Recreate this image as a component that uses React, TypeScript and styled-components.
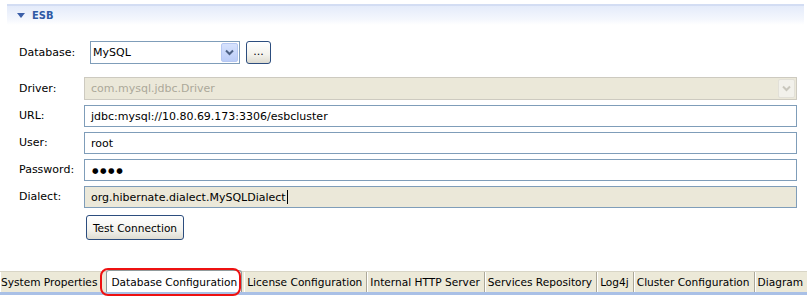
import React from 'react';
import styled, { createGlobalStyle } from 'styled-components';

const GlobalStyle = createGlobalStyle`
  html, body {
    margin: 0;
    padding: 0;
    background: #ffffff;
  }
  body {
    font-family: "DejaVu Sans", sans-serif;
    font-size: 11px;
    color: #000000;
  }
`;

const Page = styled.div`
  width: 807px;
  height: 296px;
  display: flex;
  flex-direction: column;
  overflow: hidden;
  position: relative;
`;

const Section = styled.div`
  margin: 4px 3px 0 7px;
  height: 19px;
  border-top: 2px solid #d3ddf3;
  background: linear-gradient(to bottom, #e4ebfa 0%, #f4f7fd 70%, #ffffff 100%);
  display: flex;
  align-items: center;
  gap: 7px;
  padding-left: 10px;
`;

const SectionTitle = styled.span`
  font-family: "DejaVu Sans Condensed", "DejaVu Sans", sans-serif;
  font-weight: bold;
  color: #2f5aa5;
  font-size: 11px;
`;

const Form = styled.div`
  display: grid;
  grid-template-columns: 65px 1fr;
  align-items: center;
  padding: 16px 10px 0 19px;
  row-gap: 5px;
`;

const Label = styled.div`
  height: 22px;
  line-height: 22px;
`;

const DbRow = styled.div`
  display: flex;
  align-items: center;
  gap: 6px;
  padding-left: 6px;
  margin-bottom: 8px;
`;

const DbLabel = styled(Label)`
  margin-bottom: 8px;
`;

const Combo = styled.div<{ $disabled?: boolean }>`
  box-sizing: border-box;
  height: 23px;
  width: ${(p) => (p.$disabled ? 'auto' : '150px')};
  border: 1px solid ${(p) => (p.$disabled ? '#cdcac0' : '#7f9db9')};
  background: ${(p) => (p.$disabled ? '#ebe8d9' : '#ffffff')};
  color: ${(p) => (p.$disabled ? '#aca899' : '#000000')};
  display: flex;
  align-items: center;
  padding: 0 1px 0 ${(p) => (p.$disabled ? '6px' : '2px')};
`;

const ComboText = styled.span`
  flex: 1;
`;

const ComboButton = styled.div<{ $disabled?: boolean }>`
  box-sizing: border-box;
  width: 17px;
  height: 19px;
  border-radius: 2px;
  border: 1px solid ${(p) => (p.$disabled ? '#e2e0d8' : '#b6c8f2')};
  background: ${(p) =>
    p.$disabled
      ? '#f2f1eb'
      : 'linear-gradient(to bottom, #d6e2fd 0%, #bccdf8 100%)'};
  display: flex;
  align-items: center;
  justify-content: center;
`;

const DotsButton = styled.div`
  box-sizing: border-box;
  width: 25px;
  height: 23px;
  border: 1px solid #2c4d7e;
  border-radius: 3px;
  background: linear-gradient(to bottom, #ffffff 0%, #f3f2ec 60%, #dcdad0 100%);
  display: flex;
  align-items: center;
  justify-content: center;
  padding-bottom: 2px;
`;

const Field = styled.div<{ $readonly?: boolean }>`
  box-sizing: border-box;
  height: 22px;
  border: 1px solid #7f9db9;
  background: ${(p) => (p.$readonly ? '#ebe8d9' : '#ffffff')};
  display: flex;
  align-items: center;
  padding-left: 6px;
`;

const Dots = styled.span`
  font-size: 7.5px;
  letter-spacing: 1.5px;
  margin-left: 1px;
`;

const Caret = styled.span`
  display: inline-block;
  width: 1px;
  height: 14px;
  background: #000000;
  margin-left: 1px;
`;

const Button = styled.div`
  box-sizing: border-box;
  grid-column: 2;
  justify-self: start;
  margin-top: 2px;
  margin-left: 2px;
  width: 98px;
  height: 25px;
  border: 1px solid #2c4d7e;
  border-radius: 3px;
  background: linear-gradient(to bottom, #ffffff 0%, #f4f3ee 60%, #dedcd2 100%);
  display: flex;
  align-items: center;
  justify-content: center;
  font-size: 10.6px;
`;

const TabBar = styled.div`
  margin-top: auto;
  margin-bottom: 1px;
  height: 20px;
  background: #ece9d8;
  border-top: 1px solid #d8d5c6;
  border-bottom: 3px solid #a9c0e6;
  display: flex;
  align-items: stretch;
  white-space: nowrap;
  font-size: 10.6px;
`;

const Tab = styled.div<{ $active?: boolean }>`
  display: flex;
  align-items: center;
  padding: 0 4px 0 ${(p) => (p.$active ? '4px' : '3px')};
  border-right: 1px solid #aca899;
  box-shadow: inset 1px 0 0 #ffffff;
  background: ${(p) => (p.$active ? '#ffffff' : 'transparent')};
  &:first-child {
    padding-left: 1px;
  }
  ${(p) =>
    p.$active &&
    `
    margin-top: -2px;
    border: 1px solid #919b9c;
    border-bottom: none;
    border-radius: 3px 3px 0 0;
    margin-left: 4px;
    margin-right: 2px;
  `}
`;

const Highlight = styled.div`
  position: absolute;
  left: 100px;
  top: 268px;
  width: 141px;
  height: 28px;
  box-sizing: border-box;
  border: 2px solid #ee1111;
  border-radius: 8px;
  pointer-events: none;
`;

const Chevron = ({ color }: { color: string }) => (
  <svg width="9" height="7" viewBox="0 0 9 7">
    <path d="M1 1.5 L4.5 5 L8 1.5" fill="none" stroke={color} strokeWidth="2" />
  </svg>
);

const tabs = [
  'System Properties',
  'Database Configuration',
  'License Configuration',
  'Internal HTTP Server',
  'Services Repository',
  'Log4j',
  'Cluster Configuration',
  'Diagram',
];

export default function App() {
  return (
    <Page>
      <GlobalStyle />
      <Section>
        <svg width="8" height="5" viewBox="0 0 8 5">
          <path d="M0 0 L8 0 L4 5 Z" fill="#3b5fa8" />
        </svg>
        <SectionTitle>ESB</SectionTitle>
      </Section>

      <Form>
        <DbLabel>Database:</DbLabel>
        <DbRow>
          <Combo>
            <ComboText>MySQL</ComboText>
            <ComboButton>
              <Chevron color="#4d6185" />
            </ComboButton>
          </Combo>
          <DotsButton>...</DotsButton>
        </DbRow>

        <Label>Driver:</Label>
        <Combo $disabled>
          <ComboText>com.mysql.jdbc.Driver</ComboText>
          <ComboButton $disabled>
            <Chevron color="#c9c7bd" />
          </ComboButton>
        </Combo>

        <Label>URL:</Label>
        <Field>jdbc:mysql://10.80.69.173:3306/esbcluster</Field>

        <Label>User:</Label>
        <Field>root</Field>

        <Label>Password:</Label>
        <Field>
          <Dots>●●●●</Dots>
        </Field>

        <Label>Dialect:</Label>
        <Field $readonly>
          org.hibernate.dialect.MySQLDialect
          <Caret />
        </Field>

        <Button>Test Connection</Button>
      </Form>

      <TabBar>
        {tabs.map((t, i) => (
          <Tab key={t} $active={i === 1}>
            {t}
          </Tab>
        ))}
      </TabBar>
      <Highlight />
    </Page>
  );
}
